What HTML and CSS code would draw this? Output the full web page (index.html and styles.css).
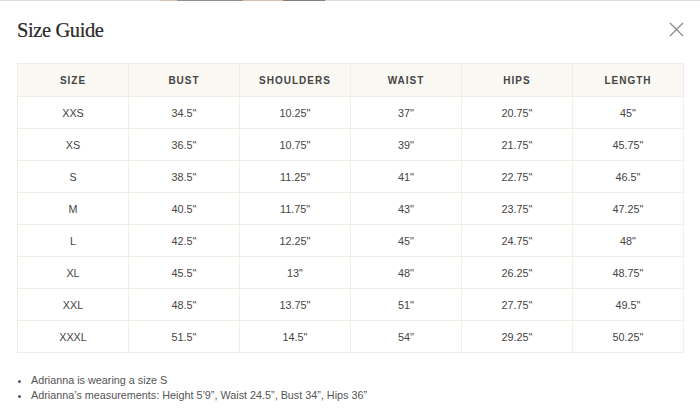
FILE: index.html
```html
<!DOCTYPE html>
<html>
<head>
<meta charset="utf-8">
<link rel="stylesheet" href="styles.css">
</head>
<body>
<div class="strip">
  <span class="seg s1"></span><span class="seg s2"></span><span class="seg s3"></span><span class="seg s4"></span><span class="seg s5"></span>
</div>
<div class="modal">
  <div class="head">
    <h1 class="title">Size Guide</h1>
    <button class="close" aria-label="Close">
      <svg width="15" height="15" viewBox="0 0 15 15"><path d="M1 1L14 14M14 1L1 14" stroke="#8a8a8a" stroke-width="1.3" fill="none"/></svg>
    </button>
  </div>
  <table class="sizes">
    <thead>
      <tr><th>SIZE</th><th>BUST</th><th>SHOULDERS</th><th>WAIST</th><th>HIPS</th><th>LENGTH</th></tr>
    </thead>
    <tbody>
      <tr><td>XXS</td><td>34.5"</td><td>10.25"</td><td>37''</td><td>20.75"</td><td>45"</td></tr>
      <tr><td>XS</td><td>36.5"</td><td>10.75"</td><td>39''</td><td>21.75"</td><td>45.75"</td></tr>
      <tr><td>S</td><td>38.5"</td><td>11.25"</td><td>41''</td><td>22.75"</td><td>46.5"</td></tr>
      <tr><td>M</td><td>40.5"</td><td>11.75"</td><td>43''</td><td>23.75"</td><td>47.25"</td></tr>
      <tr><td>L</td><td>42.5"</td><td>12.25"</td><td>45''</td><td>24.75"</td><td>48"</td></tr>
      <tr><td>XL</td><td>45.5"</td><td>13"</td><td>48''</td><td>26.25"</td><td>48.75"</td></tr>
      <tr><td>XXL</td><td>48.5"</td><td>13.75"</td><td>51''</td><td>27.75"</td><td>49.5"</td></tr>
      <tr><td>XXXL</td><td>51.5"</td><td>14.5"</td><td>54''</td><td>29.25"</td><td>50.25"</td></tr>
    </tbody>
  </table>
  <ul class="notes">
    <li>Adrianna is wearing a size S</li>
    <li>Adrianna’s measurements: Height 5’9”, Waist 24.5”, Bust 34”, Hips 36”</li>
  </ul>
</div>
</body>
</html>
```
FILE: styles.css
```css
html, body {
  margin: 0;
  padding: 0;
  background: #ffffff;
}
body {
  width: 700px;
  height: 417px;
  overflow: hidden;
  font-family: "Liberation Sans", Arial, sans-serif;
  color: #444;
}
.strip {
  display: flex;
  height: 1px;
  background: #dcdcdc;
}
.seg { display: block; height: 1px; }
.s1 { width: 160px; background: #dcdcdc; }
.s2 { width: 17px; background: #d9c2b6; }
.s3 { width: 66px; background: #8d8f98; }
.s4 { width: 40px; background: #d8bcae; }
.s5 { width: 42px; background: #7f7f85; }
.modal {
  padding: 0 16px 0 17px;
}
.head {
  display: flex;
  justify-content: space-between;
  align-items: flex-start;
  height: 62px;
}
.title {
  margin: 18px 0 0 0;
  font-family: "Liberation Serif", "Times New Roman", serif;
  font-weight: normal;
  font-size: 20.5px;
  letter-spacing: -0.4px;
  color: #2a2a2a;
  -webkit-text-stroke: 0.2px #2a2a2a;
}
.close {
  margin: 21px 0 0 0;
  padding: 0;
  border: 0;
  background: none;
  width: 15px;
  height: 15px;
}
.close svg { display: block; }
.sizes {
  width: 667px;
  border-collapse: collapse;
  table-layout: fixed;
  border: 1px solid #f1eee6;
}
.sizes th, .sizes td {
  border: 1px solid #f1eee6;
  text-align: center;
  padding: 0;
}
.sizes th {
  height: 32px;
  background: #faf8f2;
  font-size: 10px;
  font-weight: bold;
  letter-spacing: 1px;
  color: #444;
}
.sizes td {
  height: 31px;
  font-size: 10.8px;
  color: #444;
}
.notes {
  margin: 20px 0 0 0;
  padding: 0 0 0 14px;
  font-size: 10.8px;
  line-height: 15px;
  color: #555;
}
.notes li { padding-left: 0; }
```
